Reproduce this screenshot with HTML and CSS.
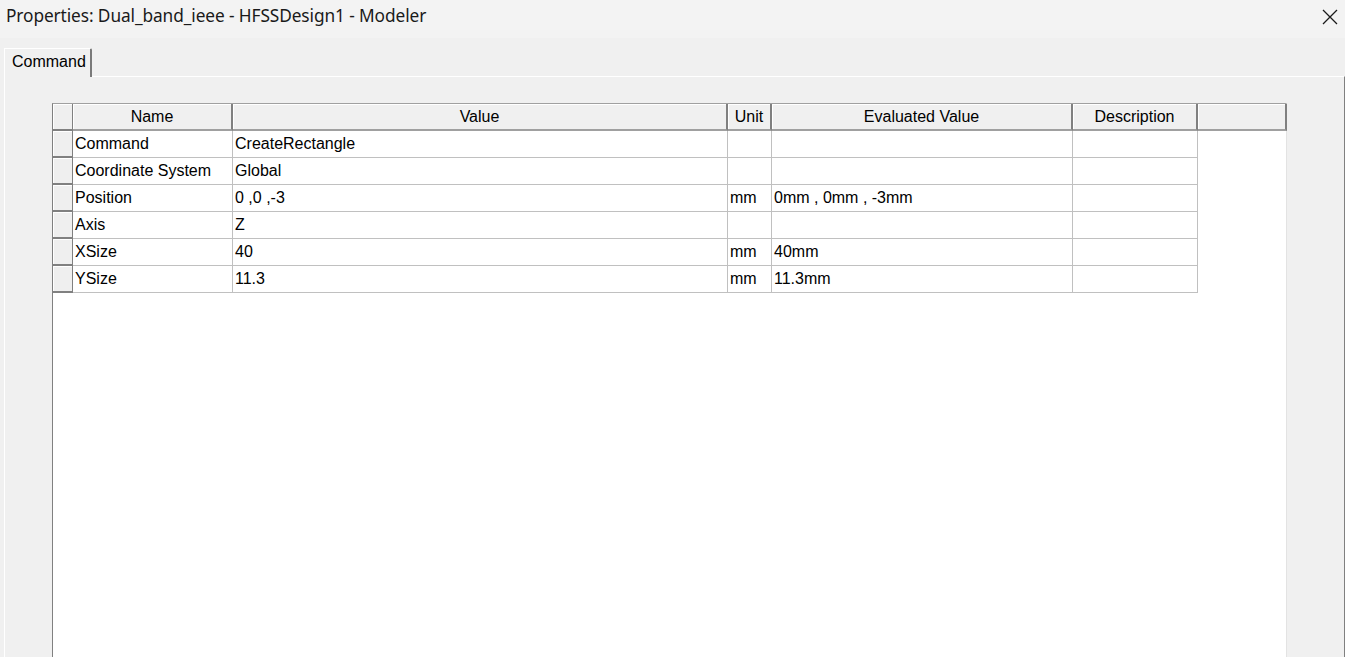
FILE: index.html
```html
<!DOCTYPE html>
<html>
<head>
<meta charset="utf-8">
<link rel="stylesheet" href="styles.css">
</head>
<body>
<div class="window">
  <div class="titlebar">
    <span class="title">Properties: Dual_band_ieee - HFSSDesign1 - Modeler</span>
    <svg class="close" width="16" height="16" viewBox="0 0 16 16"><path d="M1 1 L15 15 M15 1 L1 15" stroke="#1a1a1a" stroke-width="1.3" fill="none"/></svg>
  </div>
  <div class="tabstrip">
    <div class="tab">Command</div>
  </div>
  <div class="panel">
    <div class="grid">
      <div class="row head">
        <div class="sel"></div>
        <div class="hc">Name</div>
        <div class="hc">Value</div>
        <div class="hc">Unit</div>
        <div class="hc">Evaluated Value</div>
        <div class="hc">Description</div>
        <div class="hc"></div>
      </div>
      <div class="row">
        <div class="sel"></div>
        <div class="c">Command</div>
        <div class="c">CreateRectangle</div>
        <div class="c"></div>
        <div class="c"></div>
        <div class="c"></div>
      </div>
      <div class="row">
        <div class="sel"></div>
        <div class="c">Coordinate System</div>
        <div class="c">Global</div>
        <div class="c"></div>
        <div class="c"></div>
        <div class="c"></div>
      </div>
      <div class="row">
        <div class="sel"></div>
        <div class="c">Position</div>
        <div class="c">0 ,0 ,-3</div>
        <div class="c">mm</div>
        <div class="c">0mm , 0mm , -3mm</div>
        <div class="c"></div>
      </div>
      <div class="row">
        <div class="sel"></div>
        <div class="c">Axis</div>
        <div class="c">Z</div>
        <div class="c"></div>
        <div class="c"></div>
        <div class="c"></div>
      </div>
      <div class="row">
        <div class="sel"></div>
        <div class="c">XSize</div>
        <div class="c">40</div>
        <div class="c">mm</div>
        <div class="c">40mm</div>
        <div class="c"></div>
      </div>
      <div class="row">
        <div class="sel"></div>
        <div class="c">YSize</div>
        <div class="c">11.3</div>
        <div class="c">mm</div>
        <div class="c">11.3mm</div>
        <div class="c"></div>
      </div>
    </div>
  </div>
</div>
</body>
</html>
```

FILE: styles.css
```css
html, body {
  margin: 0;
  padding: 0;
  height: 657px;
  overflow: hidden;
  background: #f0f0f0;
}
.window {
  width: 1345px;
  height: 657px;
  display: flex;
  flex-direction: column;
  background: #f0f0f0;
}
.titlebar {
  height: 38px;
  flex: none;
  background: #f3f3f3;
  display: flex;
  align-items: center;
  justify-content: space-between;
  padding: 0 7px 7px 6px;
  box-sizing: border-box;
}
.title {
  font-family: "Noto Sans", "Open Sans", sans-serif;
  font-size: 17.3px;
  color: #1a1a1a;
  letter-spacing: -0.1px;
}
.close {
  margin-right: 0;
  margin-top: 2px;
}
.tabstrip {
  height: 38px;
  flex: none;
  display: flex;
  align-items: flex-end;
  padding-left: 4px;
  box-sizing: border-box;
}
.tab {
  height: 29px;
  box-sizing: border-box;
  padding: 0 4px 2px 7px;
  font-family: "Liberation Sans", Arial, sans-serif;
  font-size: 16px;
  color: #000;
  border-top: 1px solid #ffffff;
  border-left: 1px solid #ffffff;
  border-right: 2px solid #7a7a7a;
  border-top-right-radius: 2px;
  display: flex;
  align-items: center;
  background: #f0f0f0;
  position: relative;
  z-index: 1;
  margin-bottom: -1px;
}
.panel {
  flex: 1;
  margin-left: 4px;
  border-top: 1px solid #ffffff;
  border-left: 1px solid #ffffff;
  border-right: 1px solid #808080;
  background: #f0f0f0;
  padding: 26px 0 0 47px;
  box-sizing: border-box;
  display: flex;
}
.grid {
  width: 1235px;
  height: 700px;
  background: #ffffff;
  border-left: 1px solid #808080;
  border-top: 1px solid #a0a0a0;
  border-right: 1px solid #e3e3e3;
  box-sizing: border-box;
  font-family: "Liberation Sans", Arial, sans-serif;
  font-size: 16px;
  color: #000;
}
.row {
  display: grid;
  grid-template-columns: 20px 160px 495px 44px 301px 125px 89px;
  height: 27px;
}
.row > div {
  box-sizing: border-box;
  height: 27px;
  display: flex;
  align-items: center;
  white-space: nowrap;
  overflow: hidden;
}
.sel {
  background: #efefef;
  border-right: 1px solid #808080;
  border-bottom: 2px solid #808080;
  box-shadow: inset 1px 1px 0 #ffffff;
}
.hc {
  background: #f0f0f0;
  justify-content: center;
  border-right: 2px solid #808080;
  border-bottom: 2px solid #a0a0a0;
  box-shadow: inset 1px 1px 0 #ffffff;
}
.c {
  padding-left: 2px;
  border-right: 1px solid #c0c0c0;
  border-bottom: 1px solid #c0c0c0;
}
```
